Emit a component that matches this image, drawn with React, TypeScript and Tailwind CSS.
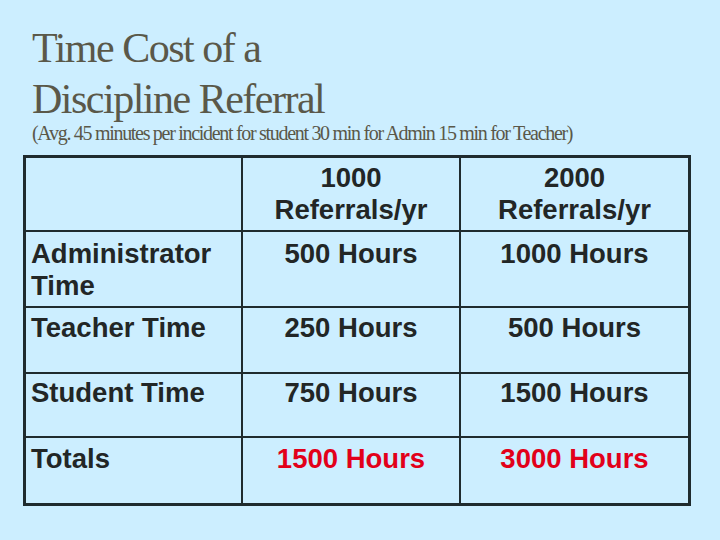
const rows = [
  { label: ["Administrator", "Time"], a: "500 Hours", b: "1000 Hours", h: "h-[76px]", pt: "pt-[6px]" },
  { label: ["Teacher Time"], a: "250 Hours", b: "500 Hours", h: "h-[66px]", pt: "pt-[4px]" },
  { label: ["Student Time"], a: "750 Hours", b: "1500 Hours", h: "h-[64px]", pt: "pt-[3px]" },
  { label: ["Totals"], a: "1500 Hours", b: "3000 Hours", h: "h-[65px]", pt: "pt-[5px]", red: true },
]

export default function App() {
  return (
    <div className="w-[720px] h-[540px] bg-[#cceeff] overflow-hidden pt-[23px]">
      {/* Title */}
      <div className="pl-[32px] text-[#5a5849] [font-family:'Liberation_Serif',serif]">
        <h1 className="text-[42px] leading-[51px] tracking-[-1.5px]">
          Time Cost of a
          <br />
          Discipline Referral
        </h1>
        <p className="text-[20px] leading-[20px] tracking-[-1.3px] -mt-[2px]">
          (Avg. 45 minutes per incident for student 30 min for Admin 15 min for Teacher)
        </p>
      </div>

      {/* Table */}
      <div className="ml-[23px] mt-[12px] w-[668px] border-[3px] border-[#1f2b2e] text-[#222626] font-bold text-[27.5px] leading-[32px] [font-family:'Liberation_Sans',Arial,sans-serif]">
        <div className="grid grid-cols-[217px_218px_227px] h-[74px] border-b-2 border-[#1f2b2e]">
          <div className="border-r-2 border-[#1f2b2e]" />
          <div className="border-r-2 border-[#1f2b2e] text-center pt-[4px]">
            1000
            <br />
            Referrals/yr
          </div>
          <div className="text-center pt-[4px]">
            2000
            <br />
            Referrals/yr
          </div>
        </div>
        {rows.map((r, i) => (
          <div
            key={i}
            className={`grid grid-cols-[217px_218px_227px] ${r.h} ${i < rows.length - 1 ? "border-b-2 border-[#1f2b2e]" : ""}`}
          >
            <div className={`border-r-2 border-[#1f2b2e] pl-[5px] ${r.pt}`}>
              {r.label.map((l, j) => (
                <div key={j}>{l}</div>
              ))}
            </div>
            <div className={`border-r-2 border-[#1f2b2e] text-center ${r.pt} ${r.red ? "text-[#e2001a]" : ""}`}>
              {r.a}
            </div>
            <div className={`text-center ${r.pt} ${r.red ? "text-[#e2001a]" : ""}`}>{r.b}</div>
          </div>
        ))}
      </div>
    </div>
  )
}
